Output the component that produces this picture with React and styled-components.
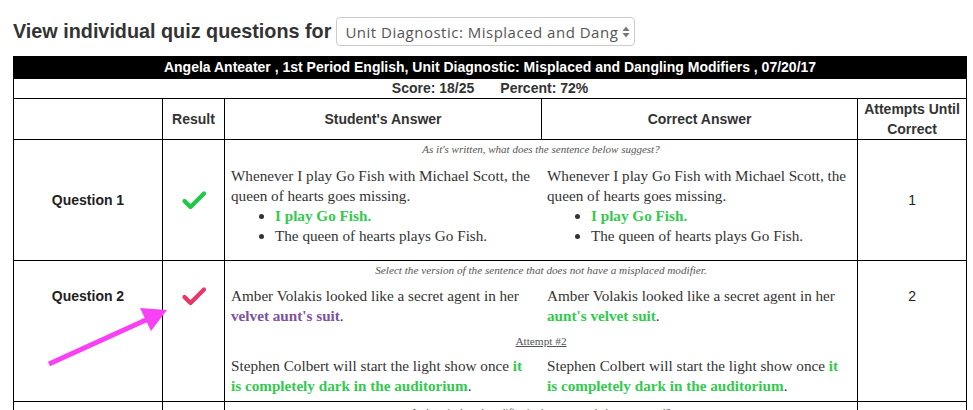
import React from 'react';
import styled, { createGlobalStyle } from 'styled-components';

const Global = createGlobalStyle`
  html, body { margin: 0; padding: 0; background: #fff; }
  body { font-family: "Liberation Sans", Arial, Helvetica, sans-serif; color: #333; }
`;

const Page = styled.div`
  position: relative;
  padding: 17px 7px 0 13px;
`;

const TitleBar = styled.div`
  display: flex;
  align-items: center;
  gap: 5px;
  height: 29px;
  margin-bottom: 10px;
`;

const Title = styled.h3`
  margin: 0;
  font-size: 19.8px;
  font-weight: 700;
  color: #333;
  line-height: 29px;
  white-space: nowrap;
`;

const SelectWrap = styled.div`
  position: relative;
  width: 299px;
  height: 29px;
`;

const Select = styled.select`
  appearance: none;
  -webkit-appearance: none;
  width: 100%;
  height: 100%;
  box-sizing: border-box;
  border: 1px solid #ccc;
  border-radius: 4px;
  background: #fff;
  padding: 0 16px 0 8px;
  font-family: "Open Sans", "Liberation Sans", sans-serif;
  font-size: 15px;
  letter-spacing: 0.5px;
  color: #555;
  outline: none;
`;

const Arrows = styled.svg`
  position: absolute;
  right: 5px;
  top: 9px;
  pointer-events: none;
`;

const Table = styled.table`
  width: 953px;
  border-collapse: collapse;
  table-layout: fixed;
`;

const Cell = styled.td`
  border: 1px solid #000;
  padding: 0;
  text-align: center;
  vertical-align: middle;
  ${p => p.$noBottom && 'border-bottom: none;'}
  ${p => p.$noTop && 'border-top: none;'}
`;

const Banner = styled(Cell)`
  background: #000;
  color: #fff;
  font-weight: 700;
  font-size: 14px;
  height: 21px;
  line-height: 17px;
`;

const ScoreCell = styled(Cell)`
  font-weight: 700;
  font-size: 14px;
  height: 19px;
  line-height: 17px;
  color: #333;
`;

const Gap = styled.span`
  display: inline-block;
  width: 26px;
`;

const HeadCell = styled.th`
  border: 1px solid #000;
  font-weight: 700;
  font-size: 14px;
  line-height: 20px;
  height: 40px;
  padding: 0 4px;
  color: #333;
  text-align: center;
  vertical-align: middle;
`;

const Label = styled(Cell)`
  font-weight: 700;
  font-size: 14px;
  color: #222;
`;

const Count = styled(Cell)`
  font-size: 14px;
  color: #222;
`;

const Content = styled(Cell)`
  text-align: left;
  vertical-align: top;
  padding: ${p => p.$pad || '2px 0 14px'};
`;

const Prompt = styled.div`
  font-family: "Liberation Serif", "Times New Roman", serif;
  font-style: italic;
  font-size: ${p => p.$size || '11px'};
  line-height: 14px;
  color: #555;
  text-align: center;
`;

const AttemptTag = styled.div`
  font-family: "Liberation Serif", "Times New Roman", serif;
  font-size: 11.3px;
  line-height: 14px;
  color: #555;
  text-align: center;
  text-decoration: underline;
`;

const Answers = styled.div`
  display: grid;
  grid-template-columns: 1fr 1fr;
  margin-top: ${p => p.$top || '10px'};
`;

const Answer = styled.div`
  padding: 0 4px 0 6px;
  font-family: "Liberation Serif", "Times New Roman", serif;
  font-size: 15.2px;
  line-height: 20px;
  color: #333;
`;

const List = styled.ul`
  margin: 0;
  padding-left: 44px;
  list-style: disc;
`;

const Hi = styled.b`
  font-weight: 700;
  color: ${p => (p.$tone === 'wrong' ? '#7d529e' : '#34c94f')};
`;

const ArrowOverlay = styled.svg`
  position: absolute;
  left: 0;
  top: 0;
  pointer-events: none;
`;

const Check = ({ color }) => (
  <svg width="26" height="20" viewBox="0 0 26 20" style={{ display: 'block', margin: '0 auto' }}>
    <polyline
      points="3.5,11 9.5,17 23,3.5"
      fill="none"
      stroke={color}
      strokeWidth="4.2"
      strokeLinecap="round"
      strokeLinejoin="round"
    />
  </svg>
);

export default function App() {
  return (
    <Page>
      <Global />
      <TitleBar>
        <Title>View individual quiz questions for</Title>
        <SelectWrap>
          <Select defaultValue="ud">
            <option value="ud">Unit Diagnostic: Misplaced and Dangling Modifiers</option>
          </Select>
          <Arrows width="8" height="12" viewBox="0 0 8 12">
            <polygon points="4,0.5 7.5,5 0.5,5" fill="#777" />
            <polygon points="4,11.5 7.5,7 0.5,7" fill="#777" />
          </Arrows>
        </SelectWrap>
      </TitleBar>

      <Table>
        <colgroup>
          <col style={{ width: 149 }} />
          <col style={{ width: 62 }} />
          <col style={{ width: 317 }} />
          <col style={{ width: 316 }} />
          <col style={{ width: 109 }} />
        </colgroup>
        <tbody>
          <tr>
            <Banner colSpan={5}>
              Angela Anteater , 1st Period English, Unit Diagnostic: Misplaced and Dangling Modifiers , 07/20/17
            </Banner>
          </tr>
          <tr>
            <ScoreCell colSpan={5}>
              Score: 18/25<Gap />Percent: 72%
            </ScoreCell>
          </tr>
          <tr>
            <HeadCell />
            <HeadCell>Result</HeadCell>
            <HeadCell>Student's Answer</HeadCell>
            <HeadCell>Correct Answer</HeadCell>
            <HeadCell>Attempts Until Correct</HeadCell>
          </tr>

          <tr>
            <Label>Question 1</Label>
            <Cell><Check color="#1fc845" /></Cell>
            <Content colSpan={2}>
              <Prompt>As it's written, what does the sentence below suggest?</Prompt>
              <Answers>
                <Answer>
                  Whenever I play Go Fish with Michael Scott, the<br />queen of hearts goes missing.
                  <List>
                    <li><Hi>I play Go Fish.</Hi></li>
                    <li>The queen of hearts plays Go Fish.</li>
                  </List>
                </Answer>
                <Answer>
                  Whenever I play Go Fish with Michael Scott, the<br />queen of hearts goes missing.
                  <List>
                    <li><Hi>I play Go Fish.</Hi></li>
                    <li>The queen of hearts plays Go Fish.</li>
                  </List>
                </Answer>
              </Answers>
            </Content>
            <Count>1</Count>
          </tr>

          <tr>
            <Label $noBottom>Question 2</Label>
            <Cell $noBottom><Check color="#ea3566" /></Cell>
            <Content colSpan={2} $noBottom $pad="2px 0 4px">
              <Prompt $size="11.2px">Select the version of the sentence that does not have a misplaced modifier.</Prompt>
              <Answers $top="9px">
                <Answer>
                  Amber Volakis looked like a secret agent in her<br /><Hi $tone="wrong">velvet aunt's suit</Hi>.
                </Answer>
                <Answer>
                  Amber Volakis looked like a secret agent in her<br /><Hi>aunt's velvet suit</Hi>.
                </Answer>
              </Answers>
            </Content>
            <Count $noBottom>2</Count>
          </tr>
          <tr>
            <Cell $noTop />
            <Cell $noTop />
            <Content colSpan={2} $noTop $pad="4px 0 5px">
              <AttemptTag>Attempt #2</AttemptTag>
              <Answers $top="8px">
                <Answer>
                  Stephen Colbert will start the light show once <Hi>it</Hi><br /><Hi>is completely dark in the auditorium</Hi>.
                </Answer>
                <Answer>
                  Stephen Colbert will start the light show once <Hi>it</Hi><br /><Hi>is completely dark in the auditorium</Hi>.
                </Answer>
              </Answers>
            </Content>
            <Count $noTop />
          </tr>

          <tr>
            <Cell />
            <Cell />
            <Content colSpan={2} $pad="3px 0 4px">
              <Prompt>Is the misplaced modifier in the sentence below corrected?</Prompt>
            </Content>
            <Cell />
          </tr>
        </tbody>
      </Table>

      <ArrowOverlay width="200" height="410" viewBox="0 0 200 410">
        <line x1="49" y1="364" x2="148" y2="319" stroke="#f840f4" strokeWidth="5" />
        <polygon points="140,308 167,310 151,331" fill="#f840f4" />
      </ArrowOverlay>
    </Page>
  );
}
